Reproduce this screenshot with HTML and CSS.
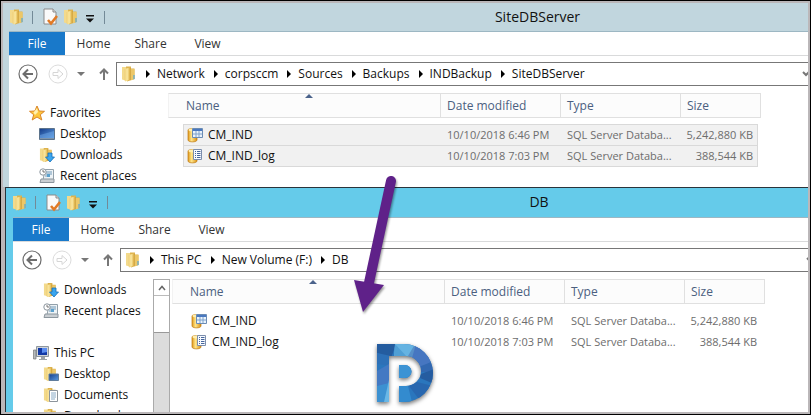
FILE: index.html
```html
<!DOCTYPE html>
<html lang="en">
<head>
<meta charset="utf-8">
<title>SiteDBServer</title>
<link rel="stylesheet" href="styles.css">
</head>
<body>
<svg class="sprite" aria-hidden="true">
  <defs>
    <linearGradient id="gold" x1="0" x2="1"><stop offset="0" stop-color="#efcf78"/><stop offset=".5" stop-color="#fae7a0"/><stop offset="1" stop-color="#e0b348"/></linearGradient>
    <linearGradient id="drum" x1="0" x2="1"><stop offset="0" stop-color="#e09a1c"/><stop offset=".4" stop-color="#ffe58a"/><stop offset="1" stop-color="#d98f14"/></linearGradient>
    <linearGradient id="screen" x1="0" y1="0" x2="1" y2="1"><stop offset="0" stop-color="#173f8c"/><stop offset="1" stop-color="#5b9be0"/></linearGradient>
    <clipPath id="logo-shape"><path clip-rule="evenodd" d="M0 0H27A29 29 0 0 1 27 58H22V42H29A15 15 0 0 0 29 12H12V58H0ZM22 21H28A6.500 6.500 0 0 1 28 34H22Z"/></clipPath>
  </defs>
  <symbol id="folder" viewBox="0 0 16 16">
    <path d="M1 1H6V15L1 13.500Z" fill="#f3da8c"/>
    <path d="M5 .500H10V2.500H13.500V13L6 15.500Z" fill="#ddb24c"/>
    <path d="M3.500 3 9 1.500V13.500L4.500 15.500 3.500 14Z" fill="url(#gold)"/>
    <path d="M9.500 3H13.500V13L9.500 14.500Z" fill="#ecc768"/>
    <path d="M9.300 2V14" stroke="#c99b38" stroke-width=".7"/>
    <path d="M12.500 9h1v4l-1 .500Z" fill="#3c9fe8"/>
  </symbol>
  <symbol id="page-check" viewBox="0 0 16 18">
    <path d="M2 1H11L14 4V16H2Z" fill="#fafafa" stroke="#8b8b8b"/>
    <path d="M11 1V4H14" fill="#ddd" stroke="#8b8b8b"/>
    <path d="M6 12 9 15.500 15 8" fill="none" stroke="#e17a26" stroke-width="2.600"/>
  </symbol>
  <symbol id="quick-menu" viewBox="0 0 8 8"><path d="M0 0H8V1.500H0ZM0 3.500H8L4 7.500Z" fill="#111"/></symbol>
  <symbol id="back" viewBox="0 0 20 20">
    <circle cx="10" cy="10" r="9" fill="#fff" stroke="#6d6d6d" stroke-width="1.200"/>
    <path d="M15 10H6M10 5.500 5.500 10 10 14.500" fill="none" stroke="#6d6d6d" stroke-width="2"/>
  </symbol>
  <symbol id="forward" viewBox="0 0 20 20">
    <circle cx="10" cy="10" r="9" fill="#fff" stroke="#dcdcdc"/>
    <path d="M5 8.500H10V5.500L15 10 10 14.500V11.500H5Z" fill="none" stroke="#d6d6d6"/>
  </symbol>
  <symbol id="caret" viewBox="0 0 8 4"><path d="M0 0H8L4 4Z" fill="#777"/></symbol>
  <symbol id="up" viewBox="0 0 10 12"><path d="M5 12V2M1 5.500 5 1.500 9 5.500" fill="none" stroke="#777" stroke-width="2"/></symbol>
  <symbol id="chevron" viewBox="0 0 8 6"><path d="M1 1 4 4 7 1" fill="none" stroke="#777" stroke-width="2"/></symbol>
  <symbol id="sort" viewBox="0 0 8 4"><path d="M0 4 4 0 8 4Z" fill="#4b638b"/></symbol>
  <symbol id="star" viewBox="0 0 16 16"><path d="M8 1 10.200 6 15.500 6.300 11.300 9.700 12.800 15 8 12 3.200 15 4.700 9.700.500 6.300 5.800 6Z" fill="#fdc63c" stroke="#d9852a"/><path d="M8 3 9 7 6 10 4.500 7.500Z" fill="#fff0b0"/></symbol>
  <symbol id="desktop" viewBox="0 0 16 16"><path d="M.500 2.500H15.500V13.500H.500Z" fill="#7c93ab" stroke="#5c738c"/><path d="M1 3H15V12H1Z" fill="url(#screen)"/><path d="M1 9 15 5V12H1Z" fill="#6fa8e8" opacity=".5"/></symbol>
  <symbol id="downloads" viewBox="0 0 16 16"><use href="#folder" width="15" height="16"/><path d="M9 6H13V10H15.500L11 15 6.500 10H9Z" fill="#3aa5ee" stroke="#1870b8" stroke-width=".8"/></symbol>
  <symbol id="recent" viewBox="0 0 16 16"><path d="M6 1.500H14.500V12H4Z" fill="#eef3f6" stroke="#92a0aa"/><path d="M7 4H13M7 6H13M6 8H11" stroke="#7199b8"/><path d="M8 6H11V9H8Z" fill="#5ca1cd"/><path d="M2 11H15V14.500H1Z" fill="#c9ced2" stroke="#8c969e"/><circle cx="4" cy="4" r="3.200" fill="#fff" stroke="#8c969e"/><path d="M4 2V4H6" fill="none" stroke="#555" stroke-width=".8"/></symbol>
  <symbol id="pc" viewBox="0 0 16 16"><path d="M3.500 1.500H15.500V11.500H3.500Z" fill="#d0d4d8" stroke="#8f979f"/><path d="M5 3H14V10H5Z" fill="#1238a5"/><path d="M9 3H14V7L9 8Z" fill="#5b8df0"/><path d="M8 12H12V14H14V15H6V14H8Z" fill="#9da3a8"/><path d="M.500 5H3V14H.500Z" fill="#b5babd" stroke="#777" stroke-width=".7"/></symbol>
  <symbol id="folder-desktop" viewBox="0 0 16 16"><use href="#folder" width="15" height="16"/><path d="M6 8H15.500V14.500H6Z" fill="url(#screen)" stroke="#607c9c"/></symbol>
  <symbol id="folder-doc" viewBox="0 0 16 16"><use href="#folder" width="15" height="16"/><path d="M6.500 3.500H14.500V14.500H6.500Z" fill="#fff" stroke="#8c949b"/><path d="M8 6H13M8 8H13M8 10H13M8 12H12" stroke="#6a94b8" stroke-width=".8"/></symbol>
  <symbol id="db" viewBox="0 0 16 16"><path d="M1 3C1 1 10 1 10 3V13C10 15.500 1 15.500 1 13Z" fill="url(#drum)" stroke="#bd7a12" stroke-width=".7"/><ellipse cx="5.500" cy="3" rx="4" ry="1.400" fill="#ffeeb0"/><path d="M5.500 1.500H15.500V10.500H5.500Z" fill="#eaf3fb" stroke="#6b8cb5"/><path d="M6 2H15V4H6Z" fill="#4a78c0"/><path d="M6 7H15M9 4V10M12 4V10" stroke="#7ea2cc"/></symbol>
  <symbol id="log" viewBox="0 0 16 16"><path d="M1 3C1 1 10 1 10 3V13C10 15.500 1 15.500 1 13Z" fill="url(#drum)" stroke="#bd7a12" stroke-width=".7"/><ellipse cx="5.500" cy="3" rx="4" ry="1.400" fill="#ffeeb0"/><path d="M6.500 1.500H14.500V11.500H6.500Z" fill="#f7faff" stroke="#7c8eac"/><path d="M8 3.500H9M10 3.500H13.500M8 5.500H9M10 5.500H13.500M8 7.500H9M10 7.500H13.500M8 9.500H9M10 9.500H13.500" stroke="#47669c"/></symbol>
</svg>

<main class="desktop">
  <section class="window">
    <header class="titlebar">
      <div class="quick">
        <svg class="icon"><use href="#folder"/></svg>
        <span class="bar"></span>
        <button aria-label="Properties"><svg class="icon check"><use href="#page-check"/></svg></button>
        <button aria-label="New folder"><svg class="icon"><use href="#folder"/></svg></button>
        <button aria-label="Customize toolbar"><svg class="more"><use href="#quick-menu"/></svg></button>
        <span class="bar"></span>
      </div>
      <h1>SiteDBServer</h1>
    </header>
    <div class="client">
      <nav class="ribbon"><button class="file">File</button><button>Home</button><button>Share</button><button>View</button></nav>
      <div class="navrow">
        <button aria-label="Back"><svg class="round"><use href="#back"/></svg></button>
        <button aria-label="Forward"><svg class="round"><use href="#forward"/></svg></button>
        <button aria-label="Recent locations"><svg class="caret"><use href="#caret"/></svg></button>
        <button aria-label="Up"><svg class="up"><use href="#up"/></svg></button>
        <div class="address">
          <svg class="icon"><use href="#folder"/></svg>
          <ol>
            <li><a href="#">Network</a></li><li><a href="#">corpsccm</a></li><li><a href="#">Sources</a></li><li><a href="#">Backups</a></li><li><a href="#">INDBackup</a></li><li><a href="#">SiteDBServer</a></li>
          </ol>
          <button class="drop" aria-label="Previous locations"><svg><use href="#chevron"/></svg></button>
        </div>
      </div>
      <div class="content">
        <ul class="tree favorites">
          <li class="root"><a href="#"><svg class="icon"><use href="#star"/></svg>Favorites</a></li>
          <li><a href="#"><svg class="icon"><use href="#desktop"/></svg>Desktop</a></li>
          <li><a href="#"><svg class="icon"><use href="#downloads"/></svg>Downloads</a></li>
          <li><a href="#"><svg class="icon"><use href="#recent"/></svg>Recent places</a></li>
        </ul>
        <table class="selected">
          <thead><tr><th>Name<svg class="sort"><use href="#sort"/></svg></th><th>Date modified</th><th>Type</th><th>Size</th></tr></thead>
          <tbody>
            <tr><td><svg class="icon"><use href="#db"/></svg>CM_IND</td><td>10/10/2018 6:46 PM</td><td>SQL Server Databa...</td><td>5,242,880 KB</td></tr>
            <tr><td><svg class="icon"><use href="#log"/></svg>CM_IND_log</td><td>10/10/2018 7:03 PM</td><td>SQL Server Databa...</td><td>388,544 KB</td></tr>
          </tbody>
        </table>
      </div>
    </div>
  </section>

  <section class="window active">
    <header class="titlebar">
      <div class="quick">
        <svg class="icon"><use href="#folder"/></svg>
        <span class="bar"></span>
        <button aria-label="Properties"><svg class="icon check"><use href="#page-check"/></svg></button>
        <button aria-label="New folder"><svg class="icon"><use href="#folder"/></svg></button>
        <button aria-label="Customize toolbar"><svg class="more"><use href="#quick-menu"/></svg></button>
        <span class="bar"></span>
      </div>
      <h1>DB</h1>
    </header>
    <div class="client">
      <nav class="ribbon"><button class="file">File</button><button>Home</button><button>Share</button><button>View</button></nav>
      <div class="navrow">
        <button aria-label="Back"><svg class="round"><use href="#back"/></svg></button>
        <button aria-label="Forward"><svg class="round"><use href="#forward"/></svg></button>
        <button aria-label="Recent locations"><svg class="caret"><use href="#caret"/></svg></button>
        <button aria-label="Up"><svg class="up"><use href="#up"/></svg></button>
        <div class="address">
          <svg class="icon"><use href="#folder"/></svg>
          <ol><li><a href="#">This PC</a></li><li><a href="#">New Volume (F:)</a></li><li><a href="#">DB</a></li></ol>
          <button class="drop" aria-label="Previous locations"><svg><use href="#chevron"/></svg></button>
        </div>
      </div>
      <div class="content">
        <ul class="tree">
          <li><a href="#"><svg class="icon"><use href="#downloads"/></svg>Downloads</a></li>
          <li><a href="#"><svg class="icon"><use href="#recent"/></svg>Recent places</a></li>
          <li class="root group"><a href="#"><svg class="icon"><use href="#pc"/></svg>This PC</a></li>
          <li><a href="#"><svg class="icon"><use href="#folder-desktop"/></svg>Desktop</a></li>
          <li><a href="#"><svg class="icon"><use href="#folder-doc"/></svg>Documents</a></li>
          <li><a href="#"><svg class="icon"><use href="#downloads"/></svg>Downloads</a></li>
        </ul>
        <div class="scroll">
          <button aria-label="Scroll up"><svg viewBox="0 0 8 6"><path d="M1 5 4 1.500 7 5" fill="none" stroke="#666" stroke-width="1.500"/></svg></button>
          <div class="thumb"></div>
        </div>
        <table>
          <thead><tr><th>Name<svg class="sort"><use href="#sort"/></svg></th><th>Date modified</th><th>Type</th><th>Size</th></tr></thead>
          <tbody>
            <tr><td><svg class="icon"><use href="#db"/></svg>CM_IND</td><td>10/10/2018 6:46 PM</td><td>SQL Server Databa...</td><td>5,242,880 KB</td></tr>
            <tr><td><svg class="icon"><use href="#log"/></svg>CM_IND_log</td><td>10/10/2018 7:03 PM</td><td>SQL Server Databa...</td><td>388,544 KB</td></tr>
          </tbody>
        </table>
      </div>
    </div>
  </section>

  <svg class="arrow" viewBox="0 0 50 150" aria-hidden="true">
    <path d="M41 11 17 122" fill="none" stroke="#5f2189" stroke-width="10" stroke-linecap="round"/>
    <path d="M4 110 34 115 13 142Z" fill="#5f2189"/>
  </svg>
  <svg class="logo" viewBox="0 0 57 58" role="img" aria-label="Logo">
    <g clip-path="url(#logo-shape)">
      <path d="M0 0H57V58H0Z" fill="#2a76bd"/>
      <path d="M0 0H19L14 14 0 9Z" fill="#245c9f"/>
      <path d="M0 9 14 12V22L0 20Z" fill="#2d70b7"/>
      <path d="M0 27 12 20V40L0 43Z" fill="#4379c3"/>
      <path d="M0 42 12 39 8 58H0Z" fill="#3c91d1"/>
      <path d="M12 36V58H7Z" fill="#69b7e6"/>
      <path d="M18 0H39L31 15 17 13Z" fill="#65b3e2"/>
      <path d="M18 0 31 14H17Z" fill="#4f9fd5"/>
      <path d="M38 0 45 5 35 16 31 12Z" fill="#568fc8"/>
      <path d="M39 0 57 16 44 24 35 14Z" fill="#4676c1"/>
      <path d="M44 22 57 17V28L44 28Z" fill="#3268b1"/>
      <path d="M44 30 57 25V40L43 34Z" fill="#255ca0"/>
      <path d="M40 38 56 42 44 58 32 42Z" fill="#2867af"/>
      <path d="M22 42H31L35 58H22Z" fill="#338bcf"/>
      <path d="M22 20H35V36H22Z" fill="#3c93d4"/>
    </g>
  </svg>
</main>
</body>
</html>
```
FILE: styles.css
```css
* { box-sizing: border-box; }

body {
  margin: 0;
  font: 12px/20px "Open Sans", "Noto Sans", sans-serif;
  color: #111;
}

svg { display: block; flex: none; }
.sprite { position: absolute; width: 0; height: 0; }
button { padding: 0; border: 0; background: none; font: inherit; color: inherit; }
a { color: inherit; text-decoration: none; }
ul, ol { margin: 0; padding: 0; list-style: none; }

.desktop {
  position: relative;
  display: flex;
  flex-direction: column;
  height: 100vh;
  padding: 2px;
  border: 1px solid #000;
  background: #bbb7b9;
  overflow: hidden;
}

.window {
  display: flex;
  flex-direction: column;
  background: #c1d6de;
}
.window.active {
  flex: 1;
  min-height: 0;
  margin-left: 2px;
  border: solid #29343b;
  border-width: 1px 0 0 1px;
  background: #65cbea;
}

.titlebar { display: flex; height: 28px; }
.active .titlebar { height: 29px; }
.titlebar h1 {
  flex: 1;
  margin: 0;
  padding-left: 158px;
  font-size: 14px;
  font-weight: 400;
  line-height: 28px;
  text-align: center;
}
.quick { display: flex; align-items: center; gap: 5px; padding-left: 6px; }
.icon { width: 16px; height: 16px; }
.check { height: 18px; }
.bar { width: 1px; height: 13px; margin: 0 4px 0 2px; background: #738a97; }
.more { width: 8px; height: 8px; margin: 4px 3px 0 2px; }

.client {
  display: flex;
  flex: 1;
  flex-direction: column;
  min-height: 0;
  margin-left: 6px;
  background: #fff;
}
.active .client { margin-left: 7px; }

.ribbon {
  display: flex;
  height: 25px;
  border-top: 1px solid #9db7c3;
  border-bottom: 1px solid #d9dadb;
}
.ribbon button { width: 57px; color: #333; }
.ribbon .file { width: 56px; background: #1979ca; color: #fff; }

.navrow { display: flex; align-items: center; padding: 6px 0 7px 9px; }
.round { width: 20px; height: 20px; margin-right: 10px; }
.caret { width: 8px; height: 4px; margin: 0 14px 0 -1px; }
.up { width: 10px; height: 12px; margin-right: 7px; }

.address {
  display: flex;
  flex: 1;
  align-items: center;
  height: 24px;
  padding-left: 4px;
  border: solid #777;
  border-width: 1px 0 1px 1px;
}
.address ol { display: flex; flex: 1; }
.address li { display: flex; align-items: center; white-space: nowrap; }
.address li::before {
  content: "";
  margin: 0 7px 0 9px;
  border: solid transparent;
  border-width: 4px 0 4px 4px;
  border-left-color: #000;
}
.drop { width: 6px; overflow: hidden; }
.drop svg { width: 8px; height: 6px; }
.active .drop { width: 2px; }

.content { display: flex; flex: 1; min-height: 0; overflow: hidden; }
.window:not(.active) .content { height: 94px; flex: none; }

.tree { width: 140px; flex: none; padding-top: 1px; }
.tree.favorites { width: 159px; padding-top: 10px; }
.tree li { height: 21px; padding-left: 30px; }
.tree .root { padding-left: 20px; }
.tree .group { margin-top: 21px; }
.tree a, td:first-child { display: flex; align-items: center; gap: 5px; white-space: nowrap; }

.scroll { width: 17px; flex: none; margin-right: 2px; border: solid #aaa; border-width: 1px 1px 0; background: #dcdcdc; }
.scroll button { display: grid; place-items: center; width: 100%; height: 16px; border-bottom: 1px solid #bbb; background: #fff; }
.scroll button svg { width: 8px; height: 6px; }
.thumb { height: 37px; border-bottom: 1px solid #999; background: #fff; }

table, thead, tbody { display: block; }
table { width: 593px; flex: none; line-height: 20px; }
tr { display: grid; grid-template-columns: 1fr 120px 120px 80px; }
thead tr { height: 25px; border: 1px solid #e0e0e0; border-left-color: #f2f2f2; background: #fcfcfc; }
th {
  position: relative;
  padding: 2px 0 0 6px;
  border-left: 1px solid #e0e0e0;
  color: #4b5f80;
  font-weight: 400;
  text-align: left;
}
th:first-child { padding-left: 17px; border: 0; }
.sort { position: absolute; top: 0; left: 50%; width: 8px; height: 4px; }
tbody { padding: 6px 3px 0 15px; }
tbody tr { height: 22px; grid-template-columns: 1fr 120px 120px 77px; border: 1px solid transparent; }
tbody tr + tr { margin-top: -1px; }
.selected tbody tr { border-color: #d9d9d9; background: #f1f1f1; }
td { padding: 0 4px 0 7px; color: #6d6d6d; font-size: 11px; white-space: nowrap; }
td:first-child { padding-left: 3px; color: #111; font-size: 12px; }
td:last-child { text-align: right; padding-left: 0; }

.arrow {
  position: absolute;
  top: 169px;
  left: 349px;
  width: 50px;
  height: 150px;
  filter: drop-shadow(1px 2px 1px #0006);
}
.logo {
  position: absolute;
  top: 343px;
  left: 376px;
  width: 57px;
  height: 58px;
  filter: drop-shadow(0 2px 2px #0008);
}
```
